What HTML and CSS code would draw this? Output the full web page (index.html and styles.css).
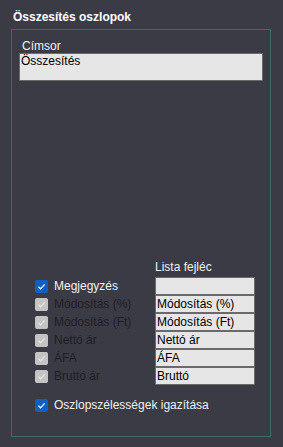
FILE: index.html
```html
<!DOCTYPE html>
<html lang="hu">

<head>
    <meta charset="UTF-8">
    <meta name="viewport" content="width=device-width, initial-scale=1.0">
    <link rel="stylesheet" href="styles.css">
</head>

<body>
    <div class="panel">
        <div class="panel-title">Összesítés oszlopok</div>
        <div class="group">
            <div class="field-label">Címsor</div>
            <div class="text-box">Összesítés</div>

            <div class="columns">
                <div class="col-head"></div>
                <div class="col-head">Lista fejléc</div>

                <label class="check-row">
                    <span class="check check-on"><svg viewBox="0 0 13 13"><path d="M3.5 6.8 L5.6 8.8 L9.6 4.4"/></svg></span>
                    <span class="check-text">Megjegyzés</span>
                </label>
                <div class="cell"></div>

                <label class="check-row disabled">
                    <span class="check check-off"><svg viewBox="0 0 13 13"><path d="M3.5 6.8 L5.6 8.8 L9.6 4.4"/></svg></span>
                    <span class="check-text">Módosítás (%)</span>
                </label>
                <div class="cell">Módosítás (%)</div>

                <label class="check-row disabled">
                    <span class="check check-off"><svg viewBox="0 0 13 13"><path d="M3.5 6.8 L5.6 8.8 L9.6 4.4"/></svg></span>
                    <span class="check-text">Módosítás (Ft)</span>
                </label>
                <div class="cell">Módosítás (Ft)</div>

                <label class="check-row disabled">
                    <span class="check check-off"><svg viewBox="0 0 13 13"><path d="M3.5 6.8 L5.6 8.8 L9.6 4.4"/></svg></span>
                    <span class="check-text">Nettó ár</span>
                </label>
                <div class="cell">Nettó ár</div>

                <label class="check-row disabled">
                    <span class="check check-off"><svg viewBox="0 0 13 13"><path d="M3.5 6.8 L5.6 8.8 L9.6 4.4"/></svg></span>
                    <span class="check-text">ÁFA</span>
                </label>
                <div class="cell">ÁFA</div>

                <label class="check-row disabled">
                    <span class="check check-off"><svg viewBox="0 0 13 13"><path d="M3.5 6.8 L5.6 8.8 L9.6 4.4"/></svg></span>
                    <span class="check-text">Bruttó ár</span>
                </label>
                <div class="cell">Bruttó</div>
            </div>

            <label class="check-row fit-row">
                <span class="check check-on"><svg viewBox="0 0 13 13"><path d="M3.5 6.8 L5.6 8.8 L9.6 4.4"/></svg></span>
                <span class="check-text">Oszlopszélességek igazítása</span>
            </label>
        </div>
    </div>
</body>

</html>
```

FILE: styles.css
```css
body {
    margin: 0;
    background-color: #3b3b45;
    font-family: 'Liberation Sans', Arial, sans-serif;
    font-size: 12px;
    color: #f0f0f0;
}

.panel {
    width: 283px;
    height: 447px;
    padding-top: 10px;
    box-sizing: border-box;
}

.panel-title {
    margin-left: 13px;
    height: 19px;
    line-height: 15px;
    font-weight: bold;
    font-size: 12px;
    color: #ffffff;
}

.group {
    margin-left: 11px;
    width: 260px;
    height: 408px;
    box-sizing: border-box;
    border: 1px solid #3e6b68;
    padding: 9px 7px 0 7px;
}

.field-label {
    margin-left: 3px;
    height: 14px;
    line-height: 14px;
}

.text-box {
    height: 28px;
    box-sizing: border-box;
    border: 1px solid #6a6a6a;
    background-color: #e6e6e6;
    color: #000000;
    padding-left: 1px;
    line-height: 14px;
}

.columns {
    display: grid;
    grid-template-columns: 120px 100px;
    margin: 177px 0 0 16px;
}

.col-head {
    height: 17px;
    padding-top: 2px;
    line-height: 14px;
    color: #f0f0f0;
}

.check-row {
    display: flex;
    align-items: center;
    gap: 6px;
    height: 18px;
}

.check {
    width: 13px;
    height: 13px;
    border-radius: 2px;
    display: flex;
    align-items: center;
    justify-content: center;
}

.check svg {
    width: 13px;
    height: 13px;
    fill: none;
    stroke-width: 1.2;
}

.check-on {
    background-color: #0f5fc4;
}

.check-on svg {
    stroke: #ffffff;
}

.check-off {
    background-color: #c4c4c4;
}

.check-off svg {
    stroke: #e6e6e6;
}

.check-text {
    line-height: 14px;
}

.disabled .check-text {
    color: #1e1e24;
}

.cell {
    height: 18px;
    box-sizing: border-box;
    border: 1px solid #6a6a6a;
    background-color: #e6e6e6;
    color: #000000;
    padding-left: 1px;
    line-height: 16px;
}

.fit-row {
    margin: 11px 0 0 16px;
}
```
